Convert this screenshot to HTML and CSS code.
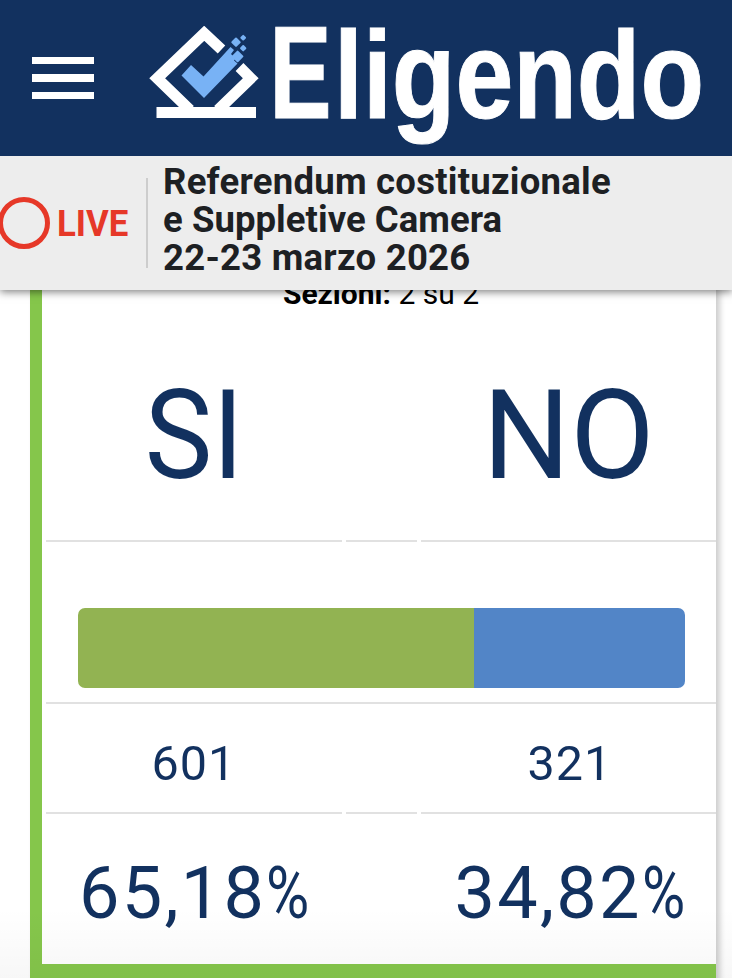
FILE: index.html
```html
<!DOCTYPE html>
<html lang="it">
<head>
  <meta charset="UTF-8" />
  <title>Eligendo</title>
  <link rel="stylesheet" href="styles.css">
</head>
<body>
  <header class="page-header">
    <div class="topbar">
      <button class="menu-btn" aria-label="Menu">
        <span></span>
        <span></span>
        <span></span>
      </button>
      <a class="brand" href="#">
        <svg class="brand-icon" width="110" height="94" viewBox="0 0 110 94">
          <g fill="none" stroke="#fff" stroke-width="11">
            <path d="M72.500 23.500 L55.200 7.300 L8.200 52.300 L41 84" />
            <path d="M90.500 41 L101.800 52.300 L69 84" />
          </g>
          <path fill="#fff" d="M7.500 81h99.500v11h-99.500z" />
          <path fill="#78b2f5" d="M32.500 49.500l9.500-10.500 12.500 11.500 27-29.500 3.500 3-3 4 4.500 4.500-1.500 2 3.500 3-33.500 34.500z" />
          <g fill="#78b2f5">
            <rect x="83.400" y="12.600" width="7.200" height="7.200" rx="1" transform="rotate(45 87 16.200)" />
            <rect x="84.200" y="26" width="8.800" height="8.800" rx="1" transform="rotate(45 88.600 30.400)" />
            <rect x="91.900" y="9.400" width="4.600" height="4.600" rx="1" transform="rotate(45 94.200 11.700)" />
            <rect x="91.700" y="19.700" width="5" height="5" rx="1" transform="rotate(45 94.200 22.200)" />
          </g>
        </svg>
        <svg class="brand-name" width="445" height="126" viewBox="0 0 445 126">
          <text y="91.500"><tspan class="cap" x="4.500" textLength="62" lengthAdjust="spacingAndGlyphs">E</tspan><tspan x="69" textLength="370" lengthAdjust="spacingAndGlyphs">ligendo</tspan></text>
        </svg>
      </a>
    </div>
    <div class="event-bar">
      <a class="live" href="#">
        <span class="live-dot"></span>
        <span class="live-text">LIVE</span>
      </a>
      <h1 class="event-title">
        <span>Referendum costituzionale</span>
        <span class="tight">e Suppletive Camera</span>
        <span>22-23 marzo 2026</span>
      </h1>
    </div>
  </header>

  <main class="card">
    <p class="sections"><b>Sezioni:</b> 2 su 2</p>
    <div class="row row-names">
      <div class="cell"><span class="si">SI</span></div>
      <div class="cell"></div>
      <div class="cell"><span class="no">NO</span></div>
    </div>
    <div class="row row-bar">
      <div class="cell">
        <div class="bar">
          <div class="bar-yes" style="width: 65.18%"></div>
          <div class="bar-no" style="width: 34.82%"></div>
        </div>
      </div>
    </div>
    <div class="row row-votes">
      <div class="cell"><span>601</span></div>
      <div class="cell"></div>
      <div class="cell"><span>321</span></div>
    </div>
    <div class="row row-percent">
      <div class="cell"><span>65,18<span class="sign">%</span></span></div>
      <div class="cell"></div>
      <div class="cell"><span>34,82<span class="sign">%</span></span></div>
    </div>
  </main>
  <div class="bottom-fade"></div>
</body>
</html>
```
FILE: styles.css
```css
* {
  box-sizing: border-box;
}
body {
  margin: 0;
  height: 978px;
  overflow: hidden;
  background: #fff;
  color: #12315f;
  font-family: Roboto, "Liberation Sans", sans-serif;
}
a {
  color: inherit;
  text-decoration: none;
}

/* header */
.page-header {
  position: relative;
  z-index: 2;
  height: 290px;
  box-shadow: 0 2px 8px rgba(0, 0, 0, 0.5);
}
.topbar {
  display: flex;
  align-items: flex-start;
  height: 156px;
  padding-left: 32px;
  background: #12315f;
}
.menu-btn {
  display: flex;
  flex: none;
  flex-direction: column;
  gap: 10px;
  width: 62px;
  margin: 57px 55px 0 0;
  padding: 0;
  border: 0;
  background: none;
}
.menu-btn span {
  height: 7.300px;
  background: #fff;
}
.brand {
  display: flex;
  flex: none;
  padding-top: 26px;
}
.brand-icon,
.brand-name {
  flex: none;
}
.brand-name {
  margin-left: 6px;
  fill: #fff;
  stroke: #fff;
  stroke-width: 1px;
  font-family: "Liberation Sans", Arial, sans-serif;
  font-size: 124px;
  font-weight: 700;
  overflow: visible;
}
.brand-name .cap {
  font-size: 131px;
}
.event-bar {
  display: flex;
  height: 134px;
  background: #ededed;
}
.live {
  display: flex;
  align-items: center;
  width: 148px;
  height: 90px;
  margin-top: 22px;
  border-right: 2px solid #cdcdcd;
  color: #e63828;
}
.live-dot {
  flex: none;
  width: 52px;
  height: 52px;
  margin-left: -2px;
  border: 5px solid #e63828;
  border-radius: 50%;
}
.live-text {
  margin: 1px 0 0 7px;
  font-size: 37px;
  font-weight: 700;
  transform: scaleX(0.94);
  transform-origin: left;
}
.event-title {
  margin: 7px 0 0 15px;
  color: #1d2023;
  font-size: 36.500px;
  font-weight: 700;
  line-height: 38px;
  letter-spacing: 0.25px;
  white-space: nowrap;
}
.event-title span {
  display: block;
}
.event-title .tight {
  letter-spacing: 0.050px;
}

/* results */
.card {
  width: 686px;
  height: 720px;
  margin: -22px 0 0 30px;
  border-left: 12px solid #85c64b;
  border-bottom: 24px solid #85c64b;
  box-shadow: 4px 2px 6px rgba(0, 0, 0, 0.2);
}
.sections {
  height: 60px;
  margin: 0;
  padding-left: 4px;
  color: #000;
  font-size: 30px;
  line-height: 52px;
  text-align: center;
}
.row {
  display: grid;
  grid-template-columns: 296px 71px 295px;
  gap: 4px;
  padding-left: 4px;
}
.cell {
  display: flex;
  align-items: center;
  justify-content: center;
  border-bottom: 2px solid #e1e1e1;
}
.row-names {
  height: 213.500px;
  font-size: 125px;
}
.row-names .cell {
  padding-top: 4px;
}
.si {
  transform: scaleX(0.91);
}
.no {
  transform: scaleX(0.98);
}
.row-bar {
  grid-template-columns: 1fr;
  height: 162px;
}
.row-bar .cell {
  align-items: flex-end;
  padding: 0 31px 14px 32px;
}
.bar {
  display: flex;
  width: 100%;
  height: 79.500px;
  border-radius: 7px;
  overflow: hidden;
}
.bar-yes {
  background: #92b352;
}
.bar-no {
  background: #5285c7;
}
.row-votes {
  height: 110px;
  font-size: 48.500px;
  letter-spacing: 1px;
}
.row-votes .cell {
  padding-top: 11px;
}
.row-votes .cell:last-child {
  padding-left: 3px;
}
.row-percent {
  height: 160px;
  font-size: 72px;
  letter-spacing: 2.200px;
}
.row-percent .cell {
  border-bottom: 0;
}
.row-percent .cell:first-child {
  padding-right: 2px;
}
.sign {
  display: inline-block;
  margin-right: -12px;
  letter-spacing: 0;
  transform: scaleX(0.82);
  transform-origin: left;
}
.bottom-fade {
  position: absolute;
  z-index: 3;
  left: 0;
  right: 0;
  top: 908px;
  height: 70px;
  background: linear-gradient(rgba(0, 0, 0, 0), rgba(0, 0, 0, 0.03));
}
```
